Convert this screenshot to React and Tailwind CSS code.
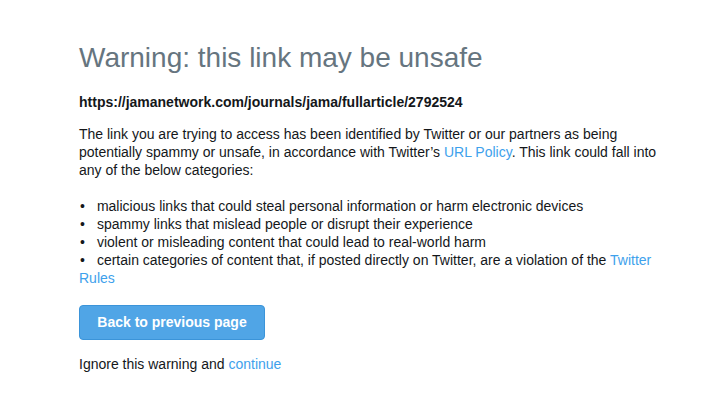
import React from 'react';

const bullets = [
  'malicious links that could steal personal information or harm electronic devices',
  'spammy links that mislead people or disrupt their experience',
  'violent or misleading content that could lead to real-world harm',
];

const Dot = () => <span className="pl-[1px] pr-[12px]">•</span>;

const App = () => {
  return (
    <div className="min-h-screen bg-white font-['Liberation_Sans',Arial,sans-serif] text-[#14171a]">
      <div className="pl-[79px] pr-6 pt-[40px]">
        <h1 className="text-[28px] leading-[36px] text-[#66757f] font-normal">
          Warning: this link may be unsafe
        </h1>

        <p className="mt-[17px] text-[14px] leading-[18px] font-bold">
          https://jamanetwork.com/journals/jama/fullarticle/2792524
        </p>

        <p className="mt-[14px] text-[14px] leading-[18px] max-w-[585px]">
          The link you are trying to access has been identified by Twitter or our partners as being
          potentially spammy or unsafe, in accordance with Twitter’s{' '}
          <a href="#" className="text-[#3ea1ec]">URL Policy</a>. This link could fall into
          any of the below categories:
        </p>

        <ul className="mt-[18px] text-[14px] leading-[18px] max-w-[590px]">
          {bullets.map((b) => (
            <li key={b}>
              <Dot />
              {b}
            </li>
          ))}
          <li>
            <Dot />
            certain categories of content that, if posted directly on Twitter, are a violation of the{' '}
            <a href="#" className="text-[#3ea1ec]">Twitter Rules</a>
          </li>
        </ul>

        <button className="mt-[18px] block h-[35px] w-[186px] rounded-[4px] border border-[#3b94d9] bg-[#50a5e6] text-[14px] font-bold text-white">
          Back to previous page
        </button>

        <p className="mt-[15px] text-[14px] leading-[18px]">
          Ignore this warning and{' '}
          <a href="#" className="text-[#3ea1ec]">continue</a>
        </p>
      </div>
    </div>
  );
};

export default App;
